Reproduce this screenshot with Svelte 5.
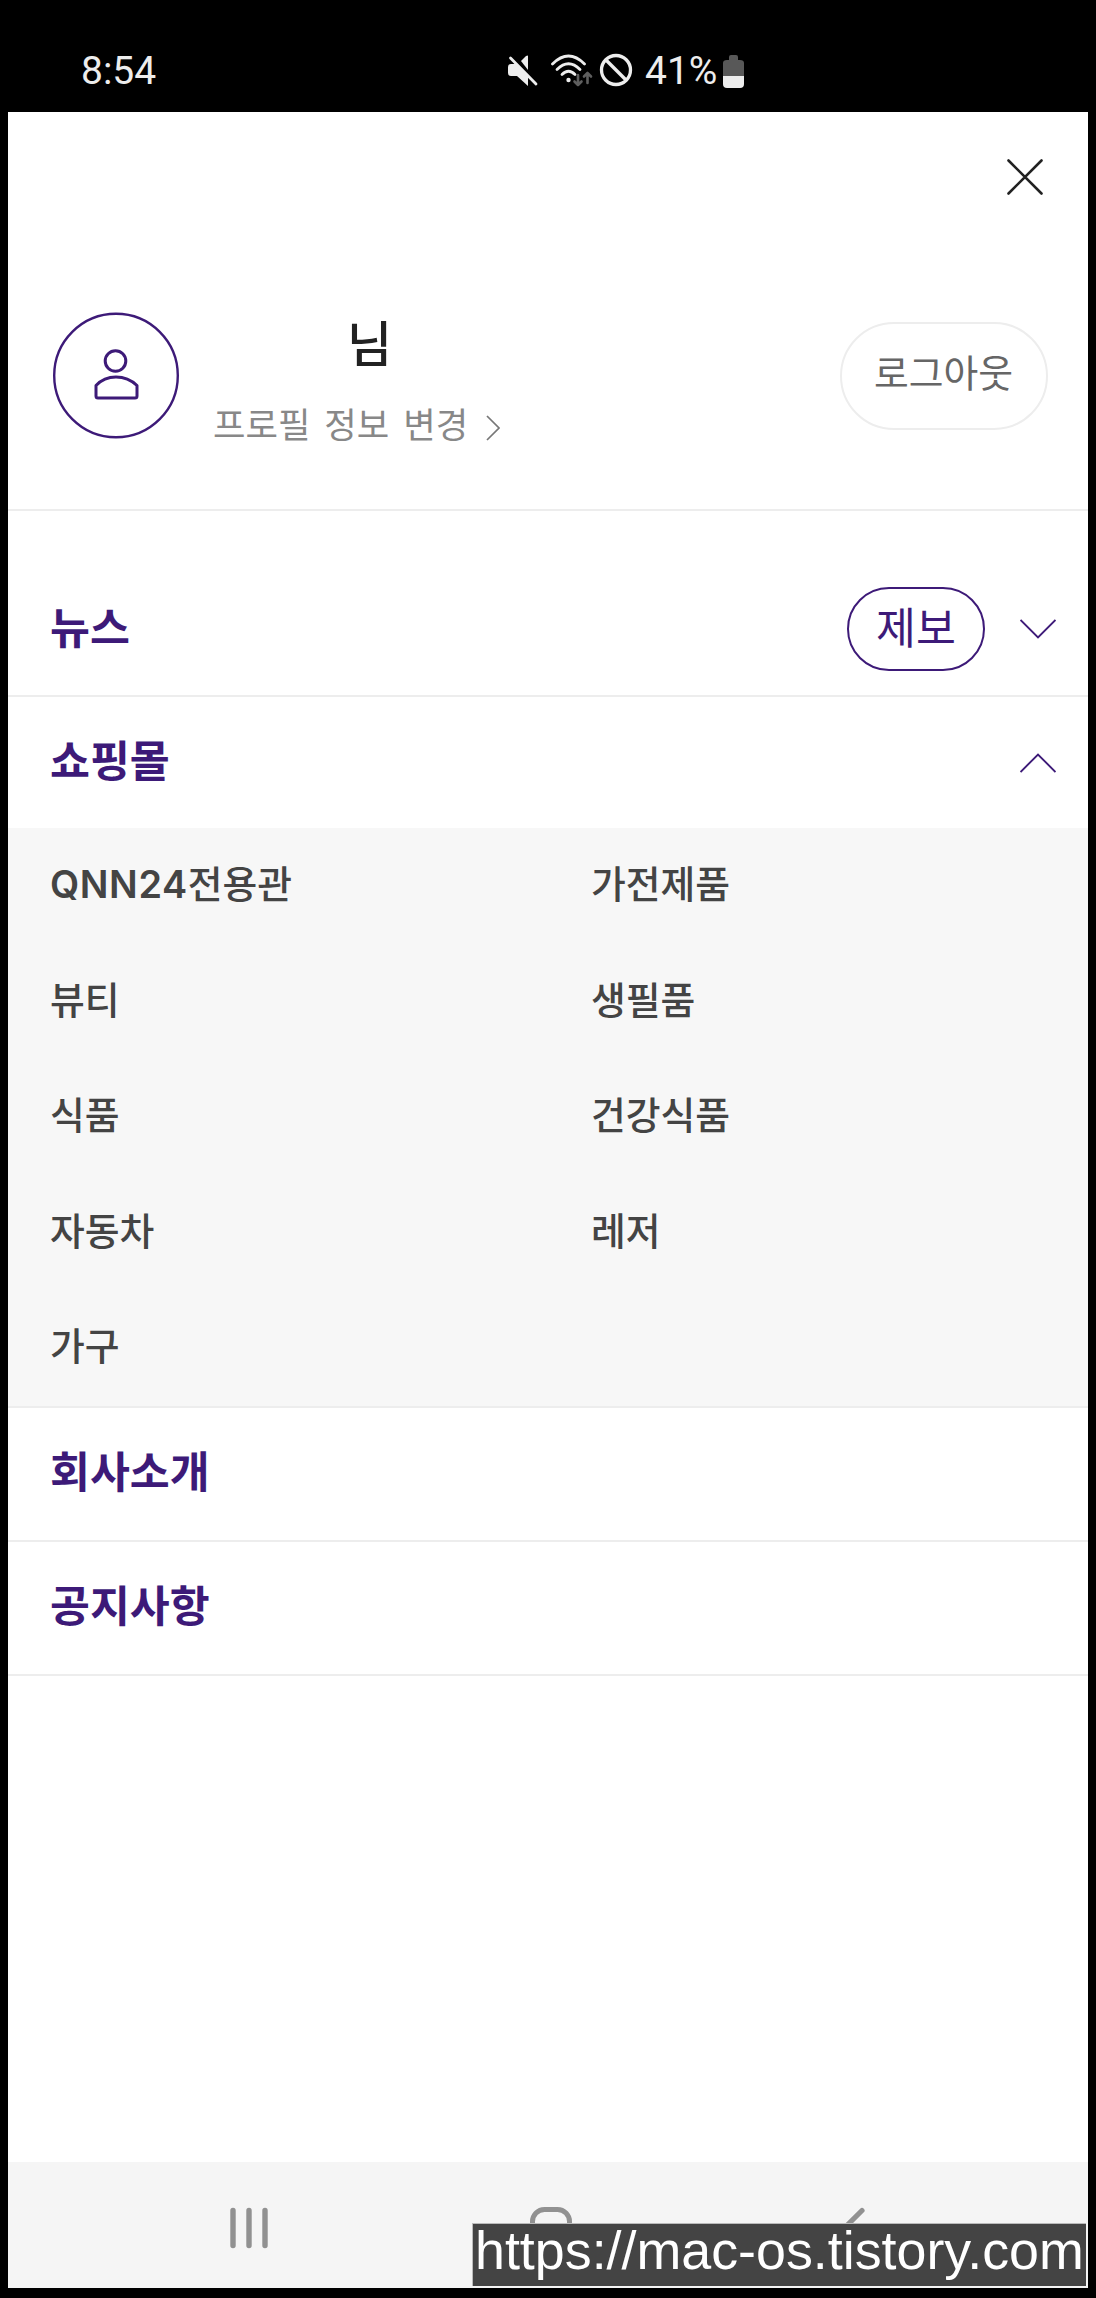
<script>
    import { slide } from 'svelte/transition';

    let menus = [
        {title: '뉴스', type: 'news', badge: '제보', arrow: true, open: false, items: []},
        {title: '쇼핑몰', type: 'shop', arrow: true, open: true, items: [
            {latin: 'QNN24', title: '전용관'},
            {title: '가전제품'},
            {title: '뷰티'},
            {title: '생필품'},
            {title: '식품'},
            {title: '건강식품'},
            {title: '자동차'},
            {title: '레저'},
            {title: '가구'},
        ]},
        {title: '회사소개', type: 'company', items: []},
        {title: '공지사항', type: 'notice', items: []},
    ];

    function toggleMenu(menu) {
        if(menu.arrow){
            menu.open = !menu.open;
            menus = menus;
        }
    }
</script>

<div class="phone">
    <div class="status">
        <span class="time">8:54</span>
        <div class="status-icons">
            <svg class="mute" width="31" height="32" viewBox="0 0 31 32">
                <path d="M1 13q0-3 3-3h6l11 11v11L10 22H4q-3 0-3-3z" fill="#ededed"/>
                <path d="M14 7L19 2q2-1 2 0v14z" fill="#ededed"/>
                <path d="M3.500 4L29 30" stroke="#ededed" stroke-width="2.800" stroke-linecap="round"/>
            </svg>
            <svg class="wifi" width="43" height="33" viewBox="0 0 43 33">
                <g fill="none" stroke="#ededed" stroke-width="2.800" stroke-linecap="round">
                    <path d="M2.500 10Q18.500-6 34.500 10"/>
                    <path d="M7 15.500Q18.500 4 30 15.500"/>
                    <path d="M12 20.500Q18.500 14 25 20.500"/>
                </g>
                <circle cx="18.500" cy="26" r="2.200" fill="#ededed"/>
                <g fill="none" stroke="#5e5e5e" stroke-width="2.600" stroke-linecap="round" stroke-linejoin="round">
                    <path d="M28 21v10M24.500 27.500L28 31l3.500-3.500"/>
                    <path d="M37.500 29V19M34 22.500l3.500-3.500 3.500 3.500"/>
                </g>
            </svg>
            <svg class="block" width="34" height="34" viewBox="0 0 34 34">
                <circle cx="17" cy="17" r="14.500" fill="none" stroke="#ededed" stroke-width="3.300"/>
                <path d="M7 7l20 20" stroke="#ededed" stroke-width="3.300"/>
            </svg>
            <span class="percent">41%</span>
            <svg class="battery" width="21" height="33" viewBox="0 0 21 33">
                <path d="M6 5V2q0-2 2-2h5q2 0 2 2v3h2q4 0 4 3v13H0V8q0-3 4-3z" fill="#585858"/>
                <path d="M0 21h21v8q0 4-4 4H4q-4 0-4-4z" fill="#ededed"/>
            </svg>
        </div>
    </div>

    <div class="screen">
        <div class="top">
            <button class="close" aria-label="닫기">
                <svg width="36" height="36" viewBox="0 0 36 36">
                    <path d="M1.500 1.500l33 33M34.500 1.500l-33 33" stroke="#222" stroke-width="2.600" stroke-linecap="round"/>
                </svg>
            </button>
        </div>

        <div class="profile">
            <svg class="avatar" width="126" height="127" viewBox="0 0 126 127">
                <g fill="none" stroke="#3d1a78">
                    <circle cx="63" cy="63.500" r="61.800" stroke-width="2.400"/>
                    <circle cx="62.500" cy="49" r="10.300" stroke-width="3"/>
                    <path d="M43 73.500Q51 65 63 65T84 73.500V84q0 2-2 2H45q-2 0-2-2z" stroke-width="3" stroke-linejoin="round"/>
                </g>
            </svg>
            <div class="info">
                <div class="name">님</div>
                <a class="edit" href="#profile">
                    <span>프로필 정보 변경</span>
                    <svg width="14" height="26" viewBox="0 0 14 26">
                        <path d="M1 1l12 12L1 25" fill="none" stroke="#777" stroke-width="1.700"/>
                    </svg>
                </a>
            </div>
            <button class="logout">로그아웃</button>
        </div>

        <div class="menus">
            {#each menus as menu}
                <div class="menu {menu.type}">
                    <div class="menu-head">
                        <button class="menu-title" on:click={() => toggleMenu(menu)}>{menu.title}</button>
                        {#if menu.badge}
                            <button class="report">{menu.badge}</button>
                        {/if}
                        {#if menu.arrow}
                            <svg class="arrow" class:up={menu.open} width="36" height="20" viewBox="0 0 36 20">
                                <path d="M.500 1L18 18.500 35.500 1" fill="none" stroke="#3d1a78" stroke-width="1.900"/>
                            </svg>
                        {/if}
                    </div>
                    {#if menu.open && menu.items.length}
                        <div class="submenu" transition:slide>
                            {#each menu.items as item}
                                <a class="item" href="#item">{#if item.latin}<b>{item.latin}</b>{/if}{item.title}</a>
                            {/each}
                        </div>
                    {/if}
                </div>
            {/each}
        </div>

        <div class="nav">
            <svg class="recents" width="40" height="42" viewBox="0 0 40 42">
                <path d="M4 3.500v35M20 3.500v35M36 3.500v35" stroke="#919191" stroke-width="5.400" stroke-linecap="round"/>
            </svg>
            <svg class="home" width="42" height="42" viewBox="0 0 42 42">
                <rect x="2.500" y="2.500" width="37" height="37" rx="12" fill="none" stroke="#919191" stroke-width="5"/>
            </svg>
            <svg class="back" width="24" height="42" viewBox="0 0 24 42">
                <path d="M21 3.500L3.500 21 21 38.500" fill="none" stroke="#919191" stroke-width="5.200" stroke-linecap="round"/>
            </svg>
        </div>
        <div class="watermark">https://mac-os.tistory.com</div>
    </div>
</div>

<style>
:global(body){
    margin: 0;
    background: #000;
}

.phone{
    width: 1096px;
    height: 2298px;
    padding: 0 8px 10px;
    box-sizing: border-box;
    background: #000;
    font-family: "Noto Sans CJK KR", sans-serif;
}

button{
    padding: 0;
    border: 0;
    background: none;
    font-family: inherit;
    cursor: pointer;
}

svg{
    display: block;
    flex: none;
}

a{
    text-decoration: none;
}

.status{
    display: flex;
    align-items: center;
    height: 112px;
    padding: 28px 0 0 73px;
    box-sizing: border-box;
    font-family: Roboto, sans-serif;
    font-size: 39px;
    line-height: 46px;
    color: #ededed;
}

.time{
    width: 426px;
    padding-top: 2px;
}

.status-icons{
    display: flex;
    align-items: center;
}

.wifi{
    margin-left: 12px;
}

.block{
    margin-left: 6px;
}

.percent{
    width: 76px;
    padding-top: 2px;
    margin-left: 12px;
}

.battery{
    margin: 3px 0 0 2px;
}

.screen{
    position: relative;
    display: flex;
    flex-direction: column;
    height: 2176px;
    background: #fff;
}

.top{
    display: flex;
    justify-content: flex-end;
    height: 210px;
    padding: 47px 45px 0 0;
    box-sizing: border-box;
}

.close{
    width: 36px;
    height: 36px;
}

.profile{
    display: flex;
    align-items: flex-start;
    height: 189px;
    padding: 0 40px 0 45px;
    box-sizing: border-box;
    border-bottom: 2px solid #ededed;
}

.avatar{
    margin-top: -10px;
}

.info{
    flex: 1;
    padding-left: 34px;
}

.name{
    padding-left: 134px;
    margin-top: -13px;
    font-size: 49px;
    font-weight: 500;
    line-height: 64px;
    color: #222;
}

.edit{
    display: flex;
    align-items: center;
    margin-top: 27px;
    font-size: 35.300px;
    line-height: 46px;
    word-spacing: 6px;
    color: #888;
}

.edit svg{
    margin: 9px 0 0 18px;
}

.logout{
    width: 208px;
    height: 108px;
    padding: 0 1px 10px 0;
    border: 2px solid #ededed;
    border-radius: 54px;
    font-size: 37.800px;
    line-height: 50px;
    color: #666;
}

.menu{
    border-bottom: 2px solid #ededed;
}

.menu-head{
    display: flex;
    align-items: center;
    height: 132px;
    padding: 0 32px 0 42px;
    box-sizing: border-box;
}

.news .menu-head{
    height: 184px;
    padding-top: 52px;
}

.shop .menu-head{
    height: 131px;
}

.menu-title{
    flex: 1;
    padding-bottom: 9px;
    text-align: left;
    font-size: 43.400px;
    font-weight: 700;
    line-height: 60px;
    color: #3d1a78;
}

.report{
    width: 138px;
    height: 84px;
    padding-bottom: 9px;
    margin-right: 35px;
    border: 2px solid #3d1a78;
    border-radius: 42px;
    font-size: 43.400px;
    line-height: 60px;
    color: #3d1a78;
}

.arrow.up{
    transform: rotate(180deg);
}

.submenu{
    display: grid;
    grid-template-columns: 1fr 1fr;
    grid-auto-rows: 115.600px;
    background: #f7f7f7;
}

.item{
    padding-left: 42px;
    font-size: 37.800px;
    font-weight: 500;
    line-height: 108px;
    color: #444;
}

.item:nth-child(even){
    padding-left: 43px;
}

.item b{
    font-family: Inter, sans-serif;
    font-weight: 600;
    letter-spacing: .600px;
}

.nav{
    display: flex;
    height: 126px;
    padding: 45px 0 0 221px;
    margin-top: auto;
    box-sizing: border-box;
    background: #f5f5f5;
}

.home{
    margin-left: 261px;
}

.back{
    margin-left: 269px;
}

.watermark{
    position: absolute;
    right: 2px;
    bottom: 2px;
    width: 614px;
    height: 63px;
    padding-left: 2px;
    box-sizing: border-box;
    border-top: 1px solid #bbb;
    border-left: 1px solid #bbb;
    background: #444;
    color: #fff;
    font-family: "Liberation Sans", sans-serif;
    font-size: 53.800px;
    line-height: 52px;
    white-space: nowrap;
}
</style>
